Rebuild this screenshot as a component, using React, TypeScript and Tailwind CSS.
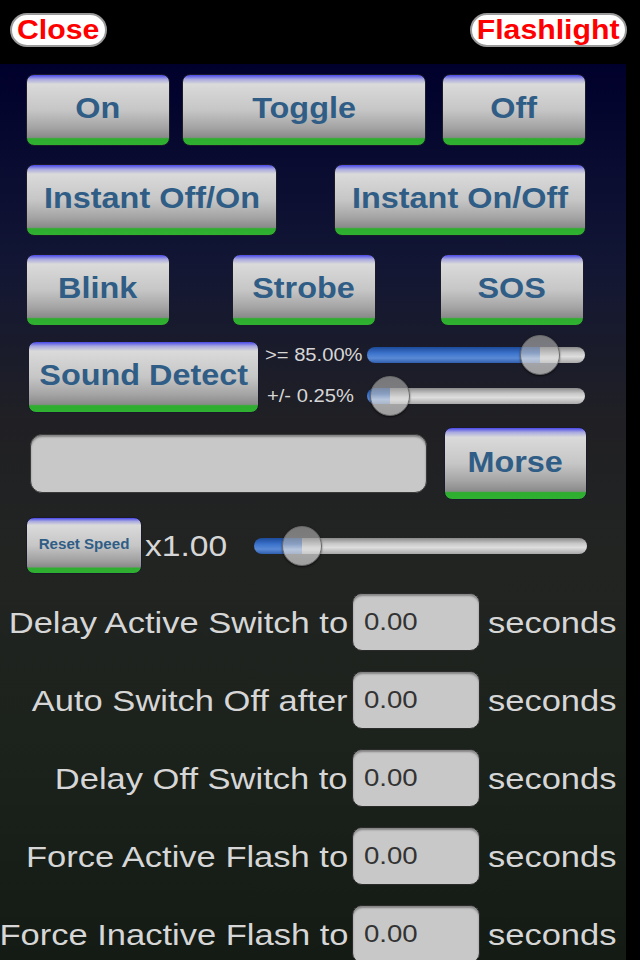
import React from "react"

const font = { fontFamily: '"Liberation Sans", Arial, sans-serif' }

function GelButton({ label, className, textClass = "text-[30px] pb-[5px]" }: { label: string; className: string; textClass?: string }) {
  return (
    <div
      className={`flex items-center justify-center rounded-[8px] border border-[#1a1a2a] bg-[linear-gradient(to_bottom,#4848e8_0%,#a8a8e0_6%,#dadada_13%,#c6c6c6_50%,#a4a4a4_75%,#8a8a8a_89%,#2eae2e_91%,#30b030_100%)] font-bold text-[#2f5d86] ${textClass} ${className}`}
    >
      <span className="inline-block scale-x-[1.08] whitespace-nowrap">{label}</span>
    </div>
  )
}

function Slider({ width, pct }: { width: number; pct: number }) {
  const thumbX = (width - 40) * pct
  return (
    <div className="relative h-[40px]" style={{ width }}>
      <div className="absolute left-0 right-0 top-[12px] flex h-[16px] overflow-hidden rounded-full">
        <div
          className="h-full bg-[linear-gradient(to_bottom,#1c4a9a_0%,#3d74cc_40%,#5a8ad6_70%,#2f5eae_100%)]"
          style={{ width: thumbX + 20 }}
        />
        <div className="h-full flex-1 bg-[linear-gradient(to_bottom,#8a8a8a_0%,#c8c8c8_35%,#dedede_60%,#a8a8a8_100%)]" />
      </div>
      <div
        className="absolute top-0 h-[40px] w-[40px] rounded-full border border-[#6a6a6a] bg-[linear-gradient(to_bottom,rgba(150,150,150,0.75)_0%,rgba(190,190,190,0.6)_45%,rgba(225,225,225,0.7)_60%,rgba(180,180,180,0.85)_100%)] shadow-[0_1px_2px_rgba(0,0,0,0.6)]"
        style={{ left: thumbX }}
      />
    </div>
  )
}

function Pill({ label, className }: { label: string; className: string }) {
  return (
    <div
      className={`flex h-[34px] items-center justify-center rounded-full border-2 border-[#9a9a9a] bg-white text-[28px] font-bold text-[#ff0000] ${className}`}
    >
      <span className="inline-block scale-x-[1.08] whitespace-nowrap">{label}</span>
    </div>
  )
}

const timers = [
  "Delay Active Switch to",
  "Auto Switch Off after",
  "Delay Off Switch to",
  "Force Active Flash to",
  "Force Inactive Flash to",
]

export default function App() {
  return (
    <div className="h-[960px] w-[640px] overflow-hidden bg-black" style={font}>
      <div className="flex h-[64px] items-start justify-between pt-[13px]">
        <Pill label="Close" className="ml-[10px] w-[97px]" />
        <Pill label="Flashlight" className="mr-[13px] w-[157px]" />
      </div>

      <div className="h-[896px] w-[626px] bg-[linear-gradient(to_bottom,#00002c_0%,#121634_22%,#202024_40%,#222422_55%,#1c221c_75%,#141a14_100%)] pt-[10px]">
        <div className="flex h-[72px]">
          <GelButton label="On" className="ml-[26px] w-[144px]" />
          <GelButton label="Toggle" className="ml-[12px] w-[244px]" />
          <GelButton label="Off" className="ml-[16px] w-[144px]" />
        </div>

        <div className="mt-[18px] flex h-[72px]">
          <GelButton label="Instant Off/On" className="ml-[26px] w-[251px]" />
          <GelButton label="Instant On/Off" className="ml-[57px] w-[252px]" />
        </div>

        <div className="mt-[18px] flex h-[72px]">
          <GelButton label="Blink" className="ml-[26px] w-[144px]" />
          <GelButton label="Strobe" className="ml-[62px] w-[144px]" />
          <GelButton label="SOS" className="ml-[64px] w-[144px]" />
        </div>

        <div className="mt-[15px] flex h-[72px]">
          <GelButton label="Sound Detect" className="ml-[28px] w-[231px]" />
          <div className="ml-[6px] flex flex-col">
            <div className="mt-[-6px] flex items-center">
              <span className="w-[102px] text-[18px] text-[#d6d6d6]">
                <span className="inline-block origin-left scale-x-[1.12]">&gt;= 85.00%</span>
              </span>
              <Slider width={218} pct={0.86} />
            </div>
            <div className="mt-[1px] flex items-center">
              <span className="w-[102px] pl-[2px] text-[18px] text-[#d6d6d6]">
                <span className="inline-block origin-left scale-x-[1.12]">+/- 0.25%</span>
              </span>
              <Slider width={218} pct={0.017} />
            </div>
          </div>
        </div>

        <div className="mt-[14px] flex h-[73px] items-center">
          <div className="ml-[30px] h-[59px] w-[397px] rounded-[12px] border border-[#3a3a3a] bg-[#c8c8c8] shadow-[inset_0_2px_2px_rgba(0,0,0,0.35)]" />
          <GelButton label="Morse" className="ml-[17px] h-[73px] w-[143px]" />
        </div>

        <div className="mt-[17px] flex h-[57px] items-center">
          <GelButton label="Reset Speed" textClass="text-[14px] pb-[2px]" className="ml-[26px] h-[57px] w-[116px]" />
          <span className="ml-[3px] w-[82px] text-[30px] text-[#d6d6d6]">
            <span className="inline-block origin-left scale-x-[1.12]">x1.00</span>
          </span>
          <div className="ml-[27px]">
            <Slider width={333} pct={0.096} />
          </div>
        </div>

        <div className="mt-[19px] flex flex-col gap-[20px]">
          {timers.map((t) => (
            <div key={t} className="flex h-[58px] items-center">
              <span className="w-[348px] whitespace-nowrap text-right text-[30px] text-[#d6d6d6]">
                <span className="inline-block origin-right scale-x-[1.15]">{t}</span>
              </span>
              <div className="ml-[4px] flex h-[58px] w-[128px] items-start rounded-[10px] border border-[#2a2a2a] bg-[#c8c8c8] pl-[11px] pt-[16px] text-[24px] leading-none text-[#333333] shadow-[inset_0_2px_2px_rgba(0,0,0,0.35)]">
                <span className="inline-block origin-left scale-x-[1.15]">0.00</span>
              </div>
              <span className="ml-[8px] text-[30px] text-[#d6d6d6]">
                <span className="inline-block origin-left scale-x-[1.15]">seconds</span>
              </span>
            </div>
          ))}
        </div>
      </div>
    </div>
  )
}
